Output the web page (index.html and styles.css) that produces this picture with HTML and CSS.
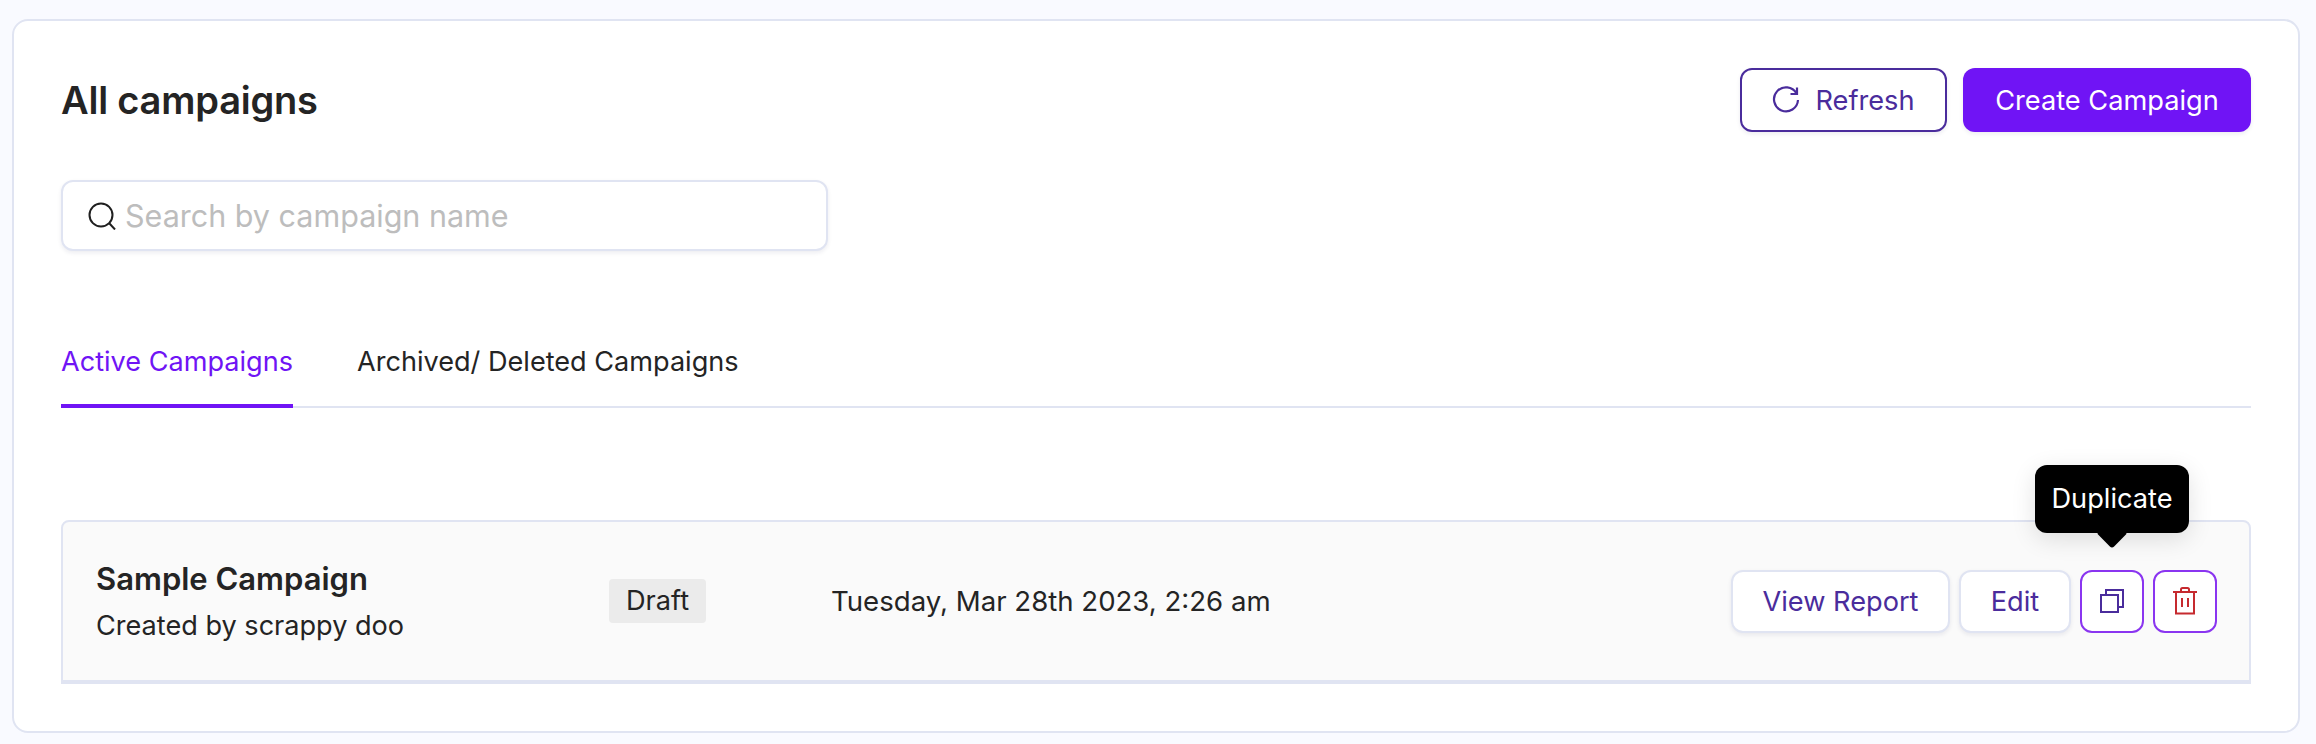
FILE: index.html
```html
<!DOCTYPE html>
<html lang="en">
<head>
	<meta charset="UTF-8">
	<title>All campaigns</title>
	<link rel="stylesheet" href="styles.css">
</head>
<body>
	<div class="card">
		<div class="header">
			<h1 class="title">All campaigns</h1>
			<div class="header-actions">
				<button class="btn btn-refresh">
					<svg class="refresh-icon" viewBox="0 0 28 28" fill="none" stroke="currentColor" stroke-width="2.2">
						<path d="M24.500 7.500A12 12 0 1 0 26 14"/>
						<path d="M25 1.500V8H18.500"/>
					</svg>
					Refresh
				</button>
				<button class="btn btn-create">Create Campaign</button>
			</div>
		</div>

		<div class="search">
			<svg class="search-icon" viewBox="0 0 28 28" fill="none" stroke="#1f1f1f" stroke-width="2">
				<circle cx="13" cy="13" r="11.5"/>
				<path d="M21 21l6 6.5"/>
			</svg>
			<span class="search-text">Search by campaign name</span>
		</div>

		<div class="tabs">
			<div class="tab tab-active">Active Campaigns</div>
			<div class="tab">Archived/ Deleted Campaigns</div>
		</div>

		<div class="row">
			<div class="row-name">
				<div class="name">Sample Campaign</div>
				<div class="owner">Created by scrappy doo</div>
			</div>
			<div class="badge">Draft</div>
			<div class="date">Tuesday, Mar 28th 2023, 2:26 am</div>
			<div class="row-actions">
				<button class="btn-small btn-report">View Report</button>
				<button class="btn-small btn-edit">Edit</button>
				<div class="tooltip-wrap">
					<div class="tooltip">Duplicate</div>
					<button class="btn-icon">
						<svg class="dup-icon" viewBox="0 0 24 24" fill="none" stroke="#4a2c9c" stroke-width="2">
							<rect x="1" y="6" width="17" height="17"/>
							<path d="M6 6V1h17v17h-5"/>
						</svg>
					</button>
				</div>
				<button class="btn-icon">
					<svg class="trash-icon" viewBox="0 0 24 28" fill="none" stroke="#c62a2f" stroke-width="2">
						<path d="M0 5h24"/>
						<path d="M8 5V2.500q0-1.500 1.500-1.500h5q1.500 0 1.500 1.500V5"/>
						<path d="M3 5v21.500h18V5"/>
						<path d="M9 11v9M15 11v9"/>
					</svg>
				</button>
			</div>
		</div>
	</div>
</body>
</html>
```

FILE: styles.css
```css
* {
	box-sizing: border-box;
}
body {
	margin: 0;
	padding: 19px 16px 11px 12px;
	height: 744px;
	background: #f9faff;
	font-family: Inter, "Liberation Sans", sans-serif;
	color: #242424;
}
.card {
	height: 714px;
	background: #fff;
	border: 2px solid #e0e4f2;
	border-radius: 16px;
	padding: 47px 47px 0;
}
.header {
	display: flex;
	justify-content: space-between;
	align-items: center;
	height: 64px;
}
.title {
	margin: 0;
	font-size: 38px;
	font-weight: 600;
	letter-spacing: -0.2px;
}
.header-actions {
	display: flex;
	gap: 16px;
}
button {
	font-family: inherit;
	cursor: pointer;
}
.btn {
	display: flex;
	align-items: center;
	justify-content: center;
	height: 64px;
	border-radius: 12px;
	font-size: 27.2px;
	box-shadow: 0 2px 4px rgba(30, 30, 80, 0.08);
}
.btn-refresh {
	width: 207px;
	gap: 15px;
	background: #fff;
	border: 2px solid #4a2c9c;
	color: #4a2c9c;
}
.refresh-icon {
	width: 28px;
	height: 28px;
}
.btn-create {
	width: 288px;
	background: #7014f5;
	border: none;
	color: #fff;
}
.search {
	display: flex;
	align-items: center;
	gap: 9px;
	width: 767px;
	height: 71px;
	margin-top: 48px;
	padding-left: 25px;
	background: #fff;
	border: 2px solid #e0e4f2;
	border-radius: 12px;
	box-shadow: 0 2px 4px rgba(30, 30, 80, 0.08);
}
.search-icon {
	width: 28px;
	height: 28px;
}
.search-text {
	font-size: 30.5px;
	color: #bdbdbd;
}
.tabs {
	display: flex;
	gap: 64px;
	height: 157px;
	padding-top: 91px;
	border-bottom: 2px solid #e0e4f2;
}
.tab {
	height: 66px;
	font-size: 27.1px;
	line-height: 40px;
}
.tab-active {
	color: #7014f5;
	border-bottom: 4px solid #7014f5;
}
.row {
	position: relative;
	display: flex;
	align-items: center;
	height: 164px;
	margin-top: 112px;
	padding: 0 32px 0 33px;
	background: #fafafa;
	border: 2px solid #e0e4f2;
	border-width: 2px 2px 4px 2px;
	border-radius: 8px 8px 0 0;
}
.row-name {
	width: 513px;
	padding-top: 1px;
}
.name {
	font-size: 31px;
	font-weight: 600;
	line-height: 44px;
}
.owner {
	font-size: 27.1px;
	line-height: 42px;
	margin-top: 4px;
}
.badge {
	width: 97px;
	height: 44px;
	background: #ebebeb;
	border-radius: 4px;
	font-size: 27.2px;
	line-height: 44px;
	text-align: center;
}
.date {
	margin-left: 125px;
	font-size: 27.6px;
}
.row-actions {
	display: flex;
	gap: 9px;
	margin-left: auto;
}
.btn-small {
	height: 63px;
	background: #fff;
	border: 2px solid #e0e4f2;
	border-radius: 12px;
	font-size: 27.2px;
	color: #4a2c9c;
	box-shadow: 0 2px 4px rgba(30, 30, 80, 0.08);
}
.btn-report {
	width: 219px;
}
.btn-edit {
	width: 112px;
}
.btn-icon {
	display: flex;
	align-items: center;
	justify-content: center;
	width: 64px;
	height: 63px;
	padding: 0;
	background: #fff;
	border: 2px solid #8a35f0;
	border-radius: 12px;
}
.dup-icon {
	width: 24px;
	height: 24px;
}
.trash-icon {
	width: 24px;
	height: 28px;
}
.tooltip-wrap {
	position: relative;
}
.tooltip {
	position: absolute;
	left: -45px;
	top: -105px;
	width: 154px;
	height: 68px;
	background: #000;
	border-radius: 12px;
	color: #fff;
	font-size: 27.2px;
	line-height: 68px;
	text-align: center;
	box-shadow: 0 6px 24px rgba(0, 0, 0, 0.12);
}
.tooltip::after {
	content: "";
	position: absolute;
	left: 66px;
	bottom: -11px;
	width: 22px;
	height: 22px;
	background: #000;
	border-radius: 3px;
	transform: rotate(45deg);
}
```
